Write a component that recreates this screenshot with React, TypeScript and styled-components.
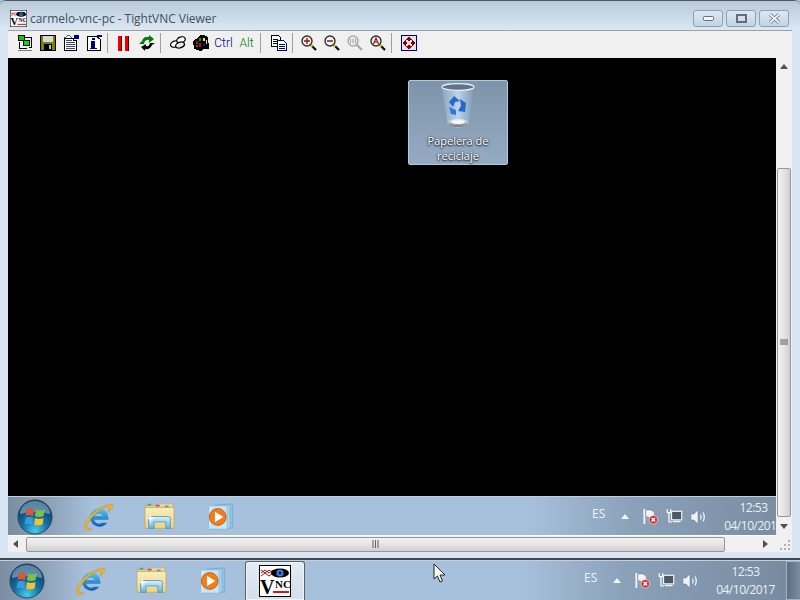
import React from "react";
import styled, { createGlobalStyle } from "styled-components";

const GlobalStyle = createGlobalStyle`
  html, body {
    margin: 0;
    padding: 0;
    width: 800px;
    height: 600px;
    overflow: hidden;
    background: #000;
    font-family: "Open Sans", "Noto Sans", "Liberation Sans", sans-serif;
  }
  * { box-sizing: border-box; }
`;

/* ---------- taskbar drawings ---------- */

const StartOrb = () => (
  <svg width="36" height="36" viewBox="0 0 38 38">
    <defs>
      <radialGradient id="orb" cx="50%" cy="90%" r="80%">
        <stop offset="0" stopColor="#46cdeb" />
        <stop offset="0.45" stopColor="#1673aa" />
        <stop offset="1" stopColor="#0d3a62" />
      </radialGradient>
    </defs>
    <circle cx="19" cy="19" r="18" fill="url(#orb)" stroke="#24465f" />
    <path d="M3 16 A16 14 0 0 1 35 16 Q19 11 3 16Z" fill="#a9cde2" opacity="0.5" />
    <path d="M10 11 Q14 9 18 11 L17 18 Q13 16 9 18Z" fill="#e2562a" />
    <path d="M20 11 Q24 13 29 11 L28 18 Q23 20 19 18Z" fill="#7cc242" />
    <path d="M9 20 Q13 18 17 20 L16 27 Q12 25 8 27Z" fill="#3a9be0" />
    <path d="M19 20 Q23 22 28 20 L27 27 Q22 29 18 27Z" fill="#f5c12e" />
  </svg>
);

const IeIcon = () => (
  <svg width="32" height="30" viewBox="0 0 34 32">
    <defs>
      <linearGradient id="ie" x1="0" y1="0" x2="0" y2="1">
        <stop offset="0" stopColor="#59c6f2" />
        <stop offset="1" stopColor="#0a5fb4" />
      </linearGradient>
    </defs>
    <path d="M19 6.5 A10 10 0 1 0 27 22 H21 A5 5 0 0 1 13 19 H28 A11 11 0 0 0 19 6.5Z M13 15 A5 5 0 0 1 22 15Z" fill="url(#ie)" fillRule="evenodd" />
    <path d="M3 29 C0 23 12 8 24 4 C29 2 33 2 33 4 C33 7 29 10 27 11 C29 8 30 5 27 5 C19 6 5 20 5 27 C5 29 8 29 11 28 C8 31 4 31 3 29Z" fill="#eeb32c" stroke="#b98a20" strokeWidth="0.4" />
  </svg>
);

const FolderIcon = () => (
  <svg width="31" height="29" viewBox="0 0 34 32">
    <defs>
      <linearGradient id="fold" x1="0" y1="0" x2="0" y2="1">
        <stop offset="0" stopColor="#fbeebb" />
        <stop offset="1" stopColor="#efd37f" />
      </linearGradient>
      <linearGradient id="lib" x1="0" y1="0" x2="0" y2="1">
        <stop offset="0" stopColor="#d9f0fb" />
        <stop offset="1" stopColor="#62b6e4" />
      </linearGradient>
    </defs>
    <path d="M1 4 H15 L17 2 H32 V6 H1Z" fill="#e8d8a0" stroke="#b3a26a" strokeWidth="0.6" />
    <rect x="4" y="2" width="4" height="2" fill="#4caf50" />
    <rect x="13" y="3" width="4" height="2" fill="#c9503c" />
    <rect x="23" y="4" width="4" height="2" fill="#6f88b8" />
    <path d="M1 6 H33 V29 H1Z" fill="url(#fold)" stroke="#bfa55c" strokeWidth="0.8" />
    <path d="M5 29 V18 Q5 16 7 16 H27 Q29 16 29 18 V29 H24 V22 H11 V29Z" fill="url(#lib)" stroke="#3c8fc4" strokeWidth="0.8" />
    <path d="M7 12 L8 17 L13 18 L8 19 L7 24 L6 19 L2 18 L6 17Z" fill="#fff" />
  </svg>
);

const MediaIcon = () => (
  <svg width="29" height="28" viewBox="0 0 30 30">
    <path d="M8 2 L27 1 V27 L8 27Z" fill="#8fc3e2" stroke="#6fa4c8" strokeWidth="0.7" />
    <path d="M5 3 L24 2 V27 L5 28Z" fill="#a9d4ec" stroke="#7fb2d2" strokeWidth="0.7" />
    <path d="M1 3 H21 V28 H1Z" fill="#c6e6f6" stroke="#7fb2d2" strokeWidth="0.7" />
    <circle cx="11" cy="15" r="9" fill="#f07c1c" stroke="#c95f10" />
    <path d="M8 9.5 L17 15 L8 20.5Z" fill="#fff" />
  </svg>
);

const VncLogo = ({ size }: { size: number }) => (
  <svg width={size} height={size} viewBox="0 0 32 32">
    <rect x="0.5" y="0.5" width="31" height="31" fill="#fff" stroke="#000" />
    <path d="M2 8 L6 5 L10 8 L14 5 M2 11 L6 8 L10 11 L14 8 M2 5 L6 8 L10 5 L14 8" stroke="#a01818" fill="none" strokeWidth="1" />
    <ellipse cx="21" cy="8" rx="9" ry="4.6" fill="#000" />
    <circle cx="21" cy="8" r="3.6" fill="#2f7fe8" />
    <circle cx="21" cy="8" r="1.3" fill="#000" />
    <text x="1" y="29" fontFamily="Liberation Serif, serif" fontWeight="700" fontSize="20" fill="#000">V</text>
    <text x="16" y="23" fontFamily="Liberation Serif, serif" fontWeight="700" fontSize="11" fill="#000">NC</text>
    <rect x="14" y="26" width="16" height="2" fill="#e01010" />
  </svg>
);

const FlagIcon = () => (
  <svg width="17" height="17" viewBox="0 0 18 18">
    <path d="M2.5 1 V17" stroke="#f4f4f4" strokeWidth="2" />
    <path d="M4 2 H9 L13 4 V10 H8 L4 9Z" fill="#f2f2f2" stroke="#555" strokeWidth="0.4" />
    <circle cx="12" cy="12.5" r="4.5" fill="#e0262a" stroke="#fff" strokeWidth="0.6" />
    <path d="M10.2 10.7 L13.8 14.3 M13.8 10.7 L10.2 14.3" stroke="#fff" strokeWidth="1.5" />
  </svg>
);

const NetIcon = () => (
  <svg width="17" height="16" viewBox="0 0 20 18">
    <rect x="6.5" y="3.5" width="12" height="10" fill="#4c5a68" stroke="#f2f2f2" strokeWidth="1.4" />
    <path d="M8 15.5 H17" stroke="#f2f2f2" strokeWidth="1.6" />
    <path d="M1.5 1 V5 H5.5 V1 M3.5 5 V16 H7" fill="none" stroke="#f6f6f6" strokeWidth="1.5" />
  </svg>
);

const SpeakerIcon = () => (
  <svg width="17" height="18" viewBox="0 0 17 18">
    <path d="M1 6 H4 L8 2 V16 L4 12 H1Z" fill="#eef2f6" stroke="#606c78" strokeWidth="0.4" />
    <path d="M10.5 6.5 Q12 9 10.5 11.5 M13 4.5 Q15.5 9 13 13.5" fill="none" stroke="#eef2f6" strokeWidth="1.3" />
  </svg>
);

/* ---------- toolbar drawings ---------- */

const Pixel = styled.svg.attrs({ width: 16, height: 16, viewBox: "0 0 16 16" })`
  display: block;
  shape-rendering: crispEdges;
`;

const ConnIcon = () => (
  <Pixel>
    <rect x="1.5" y="0.5" width="6" height="5" fill="#00d000" stroke="#000" />
    <rect x="6.5" y="5.5" width="6" height="5" fill="#00e000" stroke="#000" />
    <path d="M8 2.5 H14.5 V12.5 H12 M2.5 7 V13.5 H10" fill="none" stroke="#000" />
    <rect x="1" y="15" width="14" height="1" fill="#808080" />
  </Pixel>
);

const SaveIcon = () => (
  <Pixel>
    <rect x="0.5" y="0.5" width="15" height="15" fill="#808000" stroke="#000" />
    <rect x="3" y="1" width="10" height="6" fill="#d8d8d8" />
    <rect x="4" y="9" width="8" height="6" fill="#000" />
    <rect x="9" y="10" width="2" height="4" fill="#c0c0c0" />
  </Pixel>
);

const PropsIcon = () => (
  <Pixel>
    <path d="M1.5 3.5 H10.5 V5.5 H13.5 V15.5 H1.5Z" fill="#fff" stroke="#000" />
    <path d="M3 7.5 H12 M3 9.5 H12 M3 11.5 H12 M3 13.5 H12 M3 5.5 H9" stroke="#404080" />
    <rect x="11" y="0" width="5" height="4" fill="#000080" />
    <path d="M1 3 L6 0 L9 3" stroke="#606060" fill="none" />
  </Pixel>
);

const InfoIcon = () => (
  <Pixel>
    <path d="M1.5 1.5 H10.5 L14.5 4.5 V15.5 H1.5Z" fill="#fff" stroke="#000" />
    <rect x="6" y="3" width="3" height="2" fill="#000080" />
    <rect x="5" y="6" width="4" height="7" fill="#000080" />
    <rect x="4" y="13" width="7" height="1" fill="#000080" />
    <rect x="11" y="0" width="5" height="2" fill="#000080" />
  </Pixel>
);

const PauseIcon = () => (
  <Pixel>
    <rect x="2" y="1" width="4" height="15" fill="#f00000" />
    <rect x="5" y="1" width="1" height="15" fill="#500000" />
    <rect x="9" y="1" width="4" height="15" fill="#f00000" />
    <rect x="12" y="1" width="1" height="15" fill="#500000" />
  </Pixel>
);

const RefreshIcon = () => (
  <svg width="16" height="16" viewBox="0 0 16 16">
    <path d="M0 9 L3 6 Q5 1 10 2 L10 0 L15 4 L10 8 L10 5 Q6 4 5 9Z" fill="#008000" />
    <path d="M16 8 L13 10 Q11 15 6 14 L6 16 L2 12 L7 9 L7 11 Q10 12 11 8Z" fill="#000" />
  </svg>
);

const KeysIcon = () => (
  <svg width="16" height="16" viewBox="0 0 16 16">
    <ellipse cx="5" cy="9" rx="4.6" ry="3" transform="rotate(-20 5 9)" fill="#fff" stroke="#000" strokeWidth="1.2" />
    <ellipse cx="11" cy="5" rx="4.4" ry="3" transform="rotate(-20 11 5)" fill="#fff" stroke="#000" strokeWidth="1.2" />
    <ellipse cx="10" cy="10" rx="4.6" ry="2.8" transform="rotate(-20 10 10)" fill="#e8e8e8" stroke="#000" strokeWidth="1.2" />
  </svg>
);

const ColorsIcon = () => (
  <Pixel>
    <path d="M0 6 L5 3 L7 0 H11 L15 2 L16 14 H11 L8 16 L1 14Z" fill="#000" />
    <rect x="3" y="6" width="2" height="3" fill="#e00000" />
    <rect x="3" y="10" width="2" height="2" fill="#00a000" />
    <rect x="6" y="3" width="2" height="3" fill="#00b000" />
    <rect x="6" y="8" width="2" height="4" fill="#e00000" />
    <rect x="10" y="3" width="2" height="3" fill="#f0f000" />
    <rect x="10" y="8" width="2" height="3" fill="#0000e0" />
    <rect x="13" y="5" width="1" height="4" fill="#f0f000" />
  </Pixel>
);

const CopyIcon = () => (
  <Pixel>
    <path d="M0.5 0.5 H7.5 L9.5 2.5 V11.5 H0.5Z" fill="#fff" stroke="#000" />
    <path d="M2 4.5 H7 M2 6.5 H7 M2 8.5 H6" stroke="#000" />
    <path d="M6.5 5.5 H12.5 L15.5 8.5 V15.5 H6.5Z" fill="#fff" stroke="#000080" />
    <path d="M8 9.5 H14 M8 11.5 H14 M8 13.5 H14" stroke="#000080" />
  </Pixel>
);

type ZoomKind = "in" | "out" | "full" | "auto";

const ZoomIcon = ({ kind }: { kind: ZoomKind }) => {
  const off = kind === "full";
  const ring = off ? "#a8a8a8" : "#303030";
  const mark = off ? "#a8a8a8" : "#a01010";
  return (
    <svg width="16" height="16" viewBox="0 0 16 16">
      <path d="M9.5 9.5 L15 15" stroke={off ? "#a8a8a8" : "#000"} strokeWidth="2.2" />
      {!off && <path d="M9.5 9.5 L11.5 11.5" stroke="#e8d000" strokeWidth="2.2" />}
      <circle cx="6" cy="6" r="5" fill="#f4f4f4" stroke={ring} strokeWidth="1.4" />
      {kind === "in" && <path d="M3 6 H9 M6 3 V9" stroke={mark} strokeWidth="1.4" />}
      {kind === "out" && <path d="M3 6 H9" stroke={mark} strokeWidth="1.6" />}
      {kind === "full" && <path d="M3.5 3.5 V8.5 M6 3.5 V8.5 M8.5 3.5 V8.5" stroke={mark} strokeWidth="1.2" />}
      {kind === "auto" && <path d="M3.5 9 L6 3 L8.5 9 M4.5 7 H7.5" fill="none" stroke={mark} strokeWidth="1.2" />}
    </svg>
  );
};

const FullscreenIcon = () => (
  <Pixel>
    <rect x="0.5" y="0.5" width="15" height="15" fill="#e4e4ec" stroke="#000080" />
    <g fill="#8b0000">
      <path d="M8 1.5 L11 5 H9 V6 H7 V5 H5Z" />
      <path d="M8 14.5 L11 11 H9 V10 H7 V11 H5Z" />
      <path d="M1.5 8 L5 5 V7 H6 V9 H5 V11Z" />
      <path d="M14.5 8 L11 5 V7 H10 V9 H11 V11Z" />
    </g>
  </Pixel>
);

/* ---------- recycle bin ---------- */

const RecycleBin = () => (
  <svg width="36" height="48" viewBox="0 0 36 48">
    <defs>
      <linearGradient id="bin" x1="0" y1="0" x2="1" y2="0">
        <stop offset="0" stopColor="#8ba6c0" />
        <stop offset="0.5" stopColor="#bcd3e8" />
        <stop offset="1" stopColor="#7f9ab4" />
      </linearGradient>
      <linearGradient id="base" x1="0" y1="0" x2="0" y2="1">
        <stop offset="0" stopColor="#eef2f5" />
        <stop offset="1" stopColor="#6d767e" />
      </linearGradient>
    </defs>
    <path d="M2 6 L8 43 Q18 48 28 43 L34 6Z" fill="url(#bin)" />
    <ellipse cx="18" cy="41" rx="11" ry="4" fill="url(#base)" />
    <ellipse cx="18" cy="40" rx="7" ry="2" fill="#f6f6f6" />
    <ellipse cx="18" cy="5" rx="16" ry="3.4" fill="#5f7489" stroke="#e8eef2" strokeWidth="1.2" />
    <path d="M9 20 L14 14 L20 19 L15 20 L13 25Z" fill="#2468d0" />
    <path d="M20 17 L26 21 L25 30 L18 29 L21 24Z" fill="#2468d0" />
    <path d="M9 25 L16 28 L16 33 L11 32Z" fill="#3078dd" />
  </svg>
);

/* ---------- window parts ---------- */

const Page = styled.div`
  position: relative;
  width: 800px;
  height: 600px;
  display: flex;
  flex-direction: column;
  overflow: hidden;
  background: #a7c0dc;
`;

const Win = styled.div`
  height: 560px;
  display: flex;
  flex-direction: column;
  background: #d8e5f2;
  border-top: 1px solid #50565c;
  border-bottom: 2px solid #43474c;
  border-radius: 6px 6px 0 0;
  overflow: hidden;
`;

const TitleBar = styled.div`
  height: 29px;
  flex: none;
  display: flex;
  align-items: center;
  padding: 6px 11px 0 10px;
  background: linear-gradient(#b8c9d9, #dbe8f5);
`;

const WinIcon = styled.div`
  width: 17px;
  height: 17px;
  margin-right: 3px;
  flex: none;
  svg { display: block; }
`;

const Title = styled.span`
  flex: 1;
  font-size: 12px;
  color: #41505c;
  white-space: nowrap;
  letter-spacing: -0.05px;
`;

const CaptionGroup = styled.div`
  display: flex;
  gap: 3px;
`;

const CaptionBtn = styled.div`
  width: 30px;
  height: 17px;
  display: flex;
  align-items: center;
  justify-content: center;
  border: 1px solid #8ba0b5;
  border-radius: 3px;
  background: linear-gradient(#dfe8f1, #c3d3e2);
`;

const ToolBar = styled.div`
  height: 28px;
  flex: none;
  display: flex;
  align-items: center;
  margin: 0 8px;
  padding: 0 0 3px 5px;
  background: #f0f0f0;
  border-top: 1px solid #a0a0a0;
  font-family: Roboto, "Liberation Sans", sans-serif;
`;

const ToolBtn = styled.div`
  width: 23px;
  height: 22px;
  display: flex;
  align-items: center;
  justify-content: center;
`;

const ToolText = styled(ToolBtn)<{ $color: string }>`
  font-size: 12px;
  font-weight: 300;
  color: ${(p) => p.$color};
`;

const ToolSep = styled.div<{ $w: number }>`
  width: ${(p) => p.$w}px;
  height: 20px;
  flex: none;
  padding-left: 2px;
  &::after {
    content: "";
    display: block;
    width: 1px;
    height: 20px;
    background: #a0a0a0;
  }
`;

const Client = styled.div`
  flex: 1;
  min-height: 0;
  margin: 0 8px 6px;
  display: grid;
  grid-template-columns: 768px 16px;
  grid-template-rows: 477px 17px;
`;

const Viewport = styled.div`
  position: relative;
  overflow: hidden;
  display: flex;
  flex-direction: column;
  background: #000;
`;

const Desktop = styled.div`
  flex: none;
  height: 438px;
  position: relative;
  background: #000;
`;

const DesktopIcon = styled.div`
  position: absolute;
  left: 400px;
  top: 22px;
  width: 100px;
  height: 85px;
  display: flex;
  flex-direction: column;
  align-items: center;
  padding-top: 1px;
  border: 1px solid #a9cbe8;
  border-radius: 2px;
  background: linear-gradient(#7e94aa, #95abc3);
`;

const DesktopLabel = styled.div`
  width: 90px;
  margin-top: 3px;
  text-align: center;
  font-size: 11px;
  line-height: 15px;
  color: #fff;
  text-shadow: 0 1px 2px rgba(0, 0, 0, 0.9), 0 0 2px rgba(0, 0, 0, 0.7);
`;

const VScroll = styled.div`
  display: flex;
  flex-direction: column;
  align-items: center;
  background: #f0f0f0;
`;

const ArrowBox = styled.div`
  width: 16px;
  height: 17px;
  display: flex;
  align-items: center;
  justify-content: center;
  flex: none;
`;

const VThumb = styled.div`
  width: 14px;
  height: 349px;
  margin-top: 93px;
  margin-bottom: 1px;
  flex: none;
  display: flex;
  align-items: center;
  justify-content: center;
  border: 1px solid #979797;
  border-radius: 2px;
  background: linear-gradient(90deg, #f2f2f2, #e4e4e4 50%, #cfcfcf);
`;

const HScroll = styled.div`
  display: flex;
  align-items: center;
  background: #f0f0f0;
  border-top: 1px solid #fff;
`;

const HThumb = styled.div`
  width: 699px;
  height: 15px;
  margin-left: 2px;
  flex: none;
  display: flex;
  align-items: center;
  justify-content: center;
  border: 1px solid #979797;
  border-radius: 2px;
  background: linear-gradient(#f2f2f2, #e4e4e4 50%, #cfcfcf);
`;

const HArrowEnd = styled(ArrowBox)`
  margin-left: 33px;
`;

const Corner = styled.div`
  background: #f0f0f0;
  display: flex;
  align-items: flex-end;
  justify-content: flex-end;
  padding: 0 2px 2px 0;
`;

/* ---------- taskbar ---------- */

const Bar = styled.div`
  position: relative;
  flex: none;
  width: 800px;
  height: 40px;
  display: flex;
  align-items: center;
  border-top: 1px solid #bed0e2;
  background: linear-gradient(90deg, #7c8ea1 0, #8fa4ba 45px, #a7c0dc 85px, #a7c0dc 520px, #8ba2bb 620px, #76899e 800px);
`;

const OrbSlot = styled.div`
  width: 60px;
  height: 36px;
  flex: none;
  padding-left: 9px;
  svg { display: block; }
`;

const AppSlot = styled.div<{ $active?: boolean }>`
  width: 60px;
  height: 39px;
  flex: none;
  margin-right: 1.67px;
  display: flex;
  align-items: center;
  justify-content: center;
  ${(p) =>
    p.$active &&
    `
    border: 1px solid #55626f;
    border-bottom: none;
    border-radius: 3px 3px 0 0;
    box-shadow: inset 0 0 0 1px #eef4fa;
    background: linear-gradient(#e4ebf2, #d2deea);
  `}
`;

const Tray = styled.div`
  margin-left: auto;
  display: flex;
  align-items: center;
  height: 38px;
`;

const Lang = styled.span`
  width: 29px;
  padding-bottom: 7px;
  font-size: 12px;
  color: #eef3f8;
`;

const TrayUp = styled.span`
  width: 0;
  height: 0;
  margin-right: 13px;
  border-left: 4px solid transparent;
  border-right: 4px solid transparent;
  border-bottom: 5px solid #f2f5f8;
`;

const TrayIcon = styled.span<{ $w: number }>`
  width: ${(p) => p.$w}px;
  height: 18px;
  flex: none;
  svg { display: block; }
`;

const Clock = styled.div`
  width: 73px;
  margin-left: 8px;
  padding-top: 1px;
  text-align: center;
  font-size: 12px;
  line-height: 18px;
  letter-spacing: -0.5px;
  color: #eaf1f8;
  white-space: nowrap;
`;

const ShowDesktop = styled.div`
  width: 14px;
  height: 39px;
  flex: none;
  margin-left: 4px;
  border: 1px solid #9fb2c6;
  border-right: none;
  background: linear-gradient(90deg, #5f6f80, #7a8ca0);
`;

const Taskbar = ({ withVnc }: { withVnc?: boolean }) => (
  <Bar>
    <OrbSlot>
      <StartOrb />
    </OrbSlot>
    <AppSlot>
      <IeIcon />
    </AppSlot>
    <AppSlot>
      <FolderIcon />
    </AppSlot>
    <AppSlot>
      <MediaIcon />
    </AppSlot>
    {withVnc && (
      <AppSlot $active>
        <VncLogo size={32} />
      </AppSlot>
    )}
    <Tray>
      <Lang>ES</Lang>
      <TrayUp />
      <TrayIcon $w={24}>
        <FlagIcon />
      </TrayIcon>
      <TrayIcon $w={24}>
        <NetIcon />
      </TrayIcon>
      <TrayIcon $w={19}>
        <SpeakerIcon />
      </TrayIcon>
      <Clock>
        12:53
        <br />
        04/10/2017
      </Clock>
      <ShowDesktop />
    </Tray>
  </Bar>
);

const Cursor = styled.svg`
  position: absolute;
  left: 433px;
  top: 563px;
`;

const Arrow = ({ dir }: { dir: "up" | "down" | "left" | "right" }) => {
  const d = {
    up: "M4 1 L8 6 H0Z",
    down: "M4 6 L8 1 H0Z",
    left: "M1 4 L6 0 V8Z",
    right: "M6 4 L1 0 V8Z",
  }[dir];
  return (
    <svg width="8" height="8" viewBox="0 0 8 8">
      <path d={d} fill="#505050" />
    </svg>
  );
};

export default function App() {
  return (
    <Page>
      <GlobalStyle />
      <Win>
        <TitleBar>
          <WinIcon>
            <VncLogo size={17} />
          </WinIcon>
          <Title>carmelo-vnc-pc - TightVNC Viewer</Title>
          <CaptionGroup>
            <CaptionBtn>
              <svg width="11" height="5" viewBox="0 0 11 5">
                <rect x="0.5" y="0.5" width="10" height="4" rx="1" fill="#f4f6f8" stroke="#5f6f80" />
              </svg>
            </CaptionBtn>
            <CaptionBtn>
              <svg width="11" height="9" viewBox="0 0 11 9">
                <rect x="1" y="1" width="9" height="7" fill="none" stroke="#5f6f80" strokeWidth="2" />
                <rect x="0" y="0" width="11" height="2" fill="#5f6f80" opacity="0.3" />
              </svg>
            </CaptionBtn>
            <CaptionBtn>
              <svg width="13" height="11" viewBox="0 0 13 11">
                <path d="M2 1.5 L11 9.5 M11 1.5 L2 9.5" stroke="#5f6f80" strokeWidth="3.4" />
                <path d="M2 1.5 L11 9.5 M11 1.5 L2 9.5" stroke="#f4f6f8" strokeWidth="1.8" />
              </svg>
            </CaptionBtn>
          </CaptionGroup>
        </TitleBar>
        <ToolBar>
          <ToolBtn>
            <ConnIcon />
          </ToolBtn>
          <ToolBtn>
            <SaveIcon />
          </ToolBtn>
          <ToolBtn>
            <PropsIcon />
          </ToolBtn>
          <ToolBtn>
            <InfoIcon />
          </ToolBtn>
          <ToolSep $w={7} />
          <ToolBtn>
            <PauseIcon />
          </ToolBtn>
          <ToolBtn>
            <RefreshIcon />
          </ToolBtn>
          <ToolSep $w={8} />
          <ToolBtn>
            <KeysIcon />
          </ToolBtn>
          <ToolBtn>
            <ColorsIcon />
          </ToolBtn>
          <ToolText $color="#000080">Ctrl</ToolText>
          <ToolText $color="#008000">Alt</ToolText>
          <ToolSep $w={9} />
          <ToolBtn>
            <CopyIcon />
          </ToolBtn>
          <ToolSep $w={7} />
          <ToolBtn>
            <ZoomIcon kind="in" />
          </ToolBtn>
          <ToolBtn>
            <ZoomIcon kind="out" />
          </ToolBtn>
          <ToolBtn>
            <ZoomIcon kind="full" />
          </ToolBtn>
          <ToolBtn>
            <ZoomIcon kind="auto" />
          </ToolBtn>
          <ToolSep $w={8} />
          <ToolBtn>
            <FullscreenIcon />
          </ToolBtn>
        </ToolBar>
        <Client>
          <Viewport>
            <Desktop>
              <DesktopIcon>
                <RecycleBin />
                <DesktopLabel>Papelera de reciclaje</DesktopLabel>
              </DesktopIcon>
            </Desktop>
            <Taskbar />
          </Viewport>
          <VScroll>
            <ArrowBox>
              <Arrow dir="up" />
            </ArrowBox>
            <VThumb>
              <svg width="8" height="7" viewBox="0 0 8 7">
                <path d="M0 1 H8 M0 3 H8 M0 5 H8" stroke="#606060" />
              </svg>
            </VThumb>
            <ArrowBox>
              <Arrow dir="down" />
            </ArrowBox>
          </VScroll>
          <HScroll>
            <ArrowBox>
              <Arrow dir="left" />
            </ArrowBox>
            <HThumb>
              <svg width="8" height="8" viewBox="0 0 8 8">
                <path d="M1 0 V8 M3.5 0 V8 M6 0 V8" stroke="#606060" />
              </svg>
            </HThumb>
            <HArrowEnd>
              <Arrow dir="right" />
            </HArrowEnd>
          </HScroll>
          <Corner>
            <svg width="10" height="10" viewBox="0 0 10 10">
              <path d="M8 0h2v2H8zM4 4h2v2H4zM8 4h2v2H8zM0 8h2v2H0zM4 8h2v2H4zM8 8h2v2H8z" fill="#b0b0b0" />
            </svg>
          </Corner>
        </Client>
      </Win>
      <Taskbar withVnc />
      <Cursor width="13" height="20" viewBox="0 0 13 20">
        <path d="M1 1 V16 L4.5 13 L7 19 L9.5 18 L7 12 H12Z" fill="#fff" stroke="#222" strokeWidth="1" />
      </Cursor>
    </Page>
  );
}
